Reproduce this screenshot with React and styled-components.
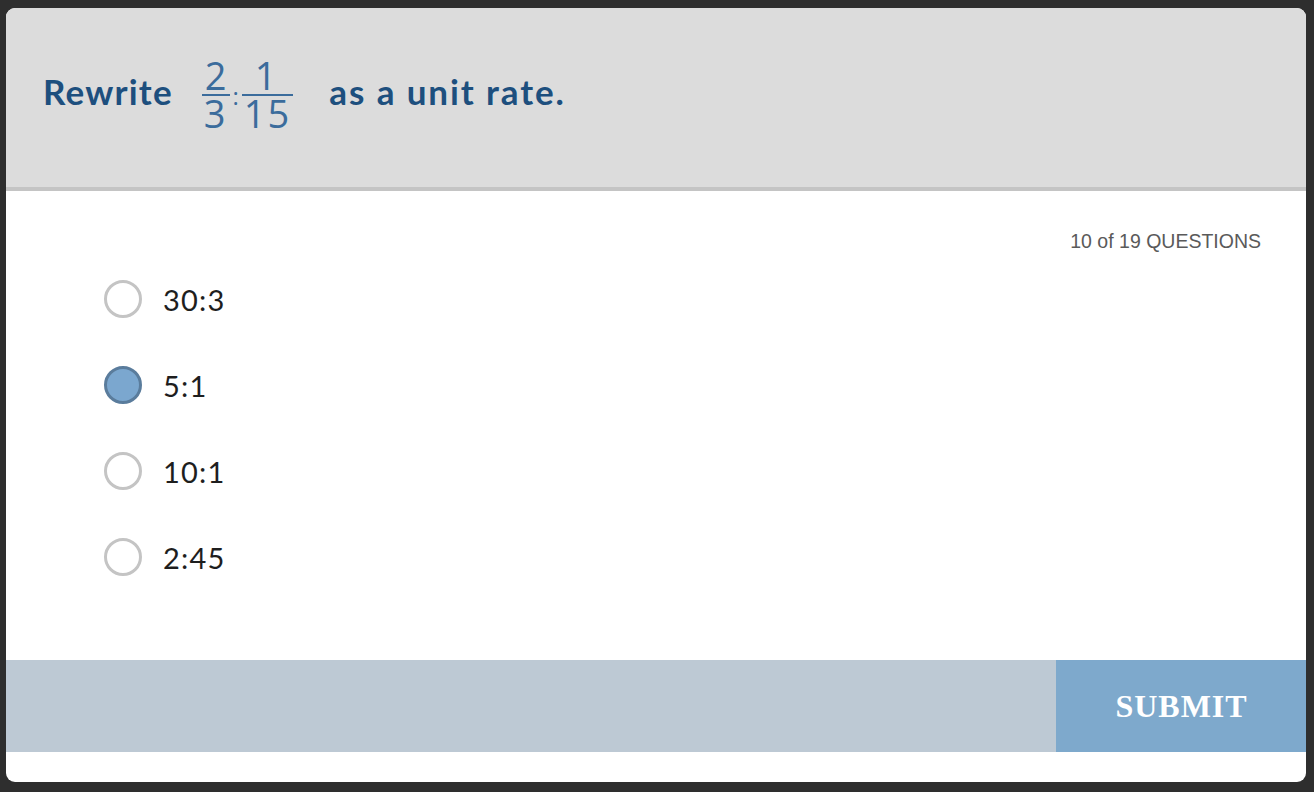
import React, { useState } from 'react';
import styled, { createGlobalStyle } from 'styled-components';

const options = ['30:3', '5:1', '10:1', '2:45'];

export default function App() {
  const [selected, setSelected] = useState(1);

  return (
    <>
      <GlobalStyle />
      <Card>
        <Header>
          <Prompt>Rewrite</Prompt>
          <MathExpr>
            <Fraction>
              <Num>2</Num>
              <Den>3</Den>
            </Fraction>
            <Colon>:</Colon>
            <Fraction>
              <Num wide>1</Num>
              <Den>15</Den>
            </Fraction>
          </MathExpr>
          <Prompt spacing={1.9}>as a unit rate.</Prompt>
        </Header>
        <Body>
          <Counter>10 of 19 QUESTIONS</Counter>
          <OptionList>
            {options.map((opt, i) => (
              <Option key={opt} onClick={() => setSelected(i)}>
                <Radio checked={selected === i} />
                <OptionLabel>{opt}</OptionLabel>
              </Option>
            ))}
          </OptionList>
        </Body>
        <Footer>
          <FooterFill />
          <SubmitButton>SUBMIT</SubmitButton>
        </Footer>
        <BottomSpace />
      </Card>
    </>
  );
}

const GlobalStyle = createGlobalStyle`
  html, body {
    margin: 0;
    padding: 0;
    background: #2e2e2e;
  }
  body {
    padding: 8px 8px 10px 6px;
    font-family: 'Lato', 'Open Sans', sans-serif;
  }
`;

const Card = styled.div`
  width: 1300px;
  height: 774px;
  background: #fff;
  border-radius: 9px;
  overflow: hidden;
  display: flex;
  flex-direction: column;
`;

const Header = styled.div`
  height: 165px;
  background: #dcdcdc;
  border-bottom: 4px solid #c4c4c4;
  display: flex;
  align-items: center;
  padding: 0 0 14px 37px;
  box-sizing: content-box;
  flex-shrink: 0;
`;

const Prompt = styled.span`
  font-family: 'Lato', sans-serif;
  font-weight: 700;
  font-size: 35px;
  letter-spacing: ${(p) => p.spacing ?? 1.2}px;
  color: #1d4f7e;
`;

const MathExpr = styled.span`
  display: inline-flex;
  align-items: center;
  margin: 6px 36px 0 29px;
  color: #3b6c9c;
  font-family: 'Open Sans', 'DejaVu Sans', sans-serif;
`;

const Fraction = styled.span`
  display: inline-flex;
  flex-direction: column;
  align-items: center;
`;

const Num = styled.span`
  font-size: 38px;
  line-height: 34px;
  padding: 0 ${(p) => (p.wide ? '6px' : '2px')} 2px 2px;
  border-bottom: 2px solid #3b6c9c;
  align-self: stretch;
  text-align: center;
`;

const Den = styled.span`
  font-size: 38px;
  line-height: 34px;
  padding: 0 2px 0;
  letter-spacing: 2px;
`;

const Colon = styled.span`
  font-size: 24px;
  line-height: 24px;
  margin: 0 3px;
  transform: translateY(2px);
`;

const Body = styled.div`
  flex: 1;
  padding: 40px 45px 0 98px;
`;

const Counter = styled.div`
  font-family: 'Liberation Sans', Arial, sans-serif;
  font-size: 19.5px;
  line-height: 20px;
  color: #5a5a5a;
  text-align: right;
`;

const OptionList = styled.div`
  margin-top: 5px;
  display: flex;
  flex-direction: column;
`;

const Option = styled.label`
  height: 86px;
  display: flex;
  align-items: center;
  gap: 21px;
  cursor: pointer;
`;

const Radio = styled.span`
  width: 38px;
  height: 38px;
  box-sizing: border-box;
  border-radius: 50%;
  border: 3px solid ${(p) => (p.checked ? '#5a7c9c' : '#c4c4c4')};
  background: ${(p) => (p.checked ? '#7ba7cf' : '#fff')};
  flex-shrink: 0;
`;

const OptionLabel = styled.span`
  font-family: 'Lato', sans-serif;
  font-size: 29px;
  letter-spacing: 1.2px;
  color: #1e1e1e;
`;

const Footer = styled.div`
  height: 92px;
  display: flex;
  flex-shrink: 0;
`;

const FooterFill = styled.div`
  flex: 1;
  background: #bdc9d4;
`;

const SubmitButton = styled.button`
  width: 250px;
  border: none;
  background: #7ea9cc;
  color: #fff;
  font-family: 'Liberation Serif', 'DejaVu Serif', serif;
  font-weight: 700;
  font-size: 32px;
  letter-spacing: 1px;
  padding: 0 0 0 1px;
  cursor: pointer;
`;

const BottomSpace = styled.div`
  height: 30px;
  flex-shrink: 0;
`;
